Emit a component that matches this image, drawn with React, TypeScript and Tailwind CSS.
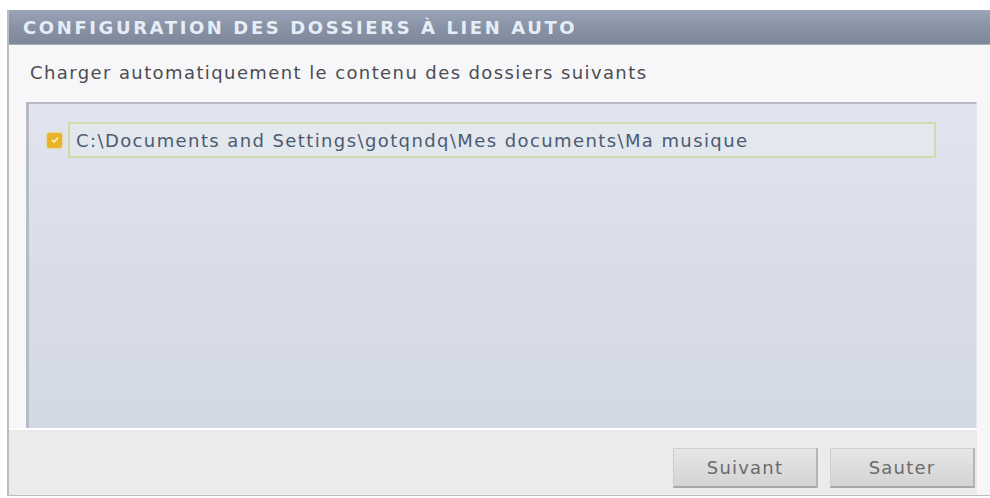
export default function App() {
  return (
    <div className="h-[498px] w-[990px] overflow-hidden bg-white pl-[7px] pt-[10px]">
      <div className="flex h-[486px] flex-col border-l-2 border-b border-[#b9bcc2] bg-[#f7f7f9]">
        {/* title bar */}
        <div className="flex h-[35px] items-center bg-gradient-to-b from-[#9aa5b6] via-[#8893a6] to-[#7d889b] pl-[14px] border-b border-[#a9b0bc]">
          <span className="font-['DejaVu_Sans',sans-serif] text-[18px] font-bold tracking-[2.6px] text-[#e6edf6]">
            CONFIGURATION DES DOSSIERS À LIEN AUTO
          </span>
        </div>

        <div className="flex flex-1 flex-col pr-[13px]">
          <div className="flex h-[57px] items-center pl-[21px] pb-[2px]">
            <span className="font-['DejaVu_Sans',sans-serif] text-[18px] tracking-[1.4px] text-[#4b4d52]">
              Charger automatiquement le contenu des dossiers suivants
            </span>
          </div>

          {/* folder list */}
          <div className="ml-[17px] h-[326px] border-l-[3px] border-t-2 border-r border-[#b7bbc6] border-r-[#e3e6ee] bg-gradient-to-b from-[#e2e5ef] via-[#d9dde9] to-[#d3d9e4] pl-[18px] pr-[40px] pt-[18px]">
            <div className="flex items-center gap-[6px]">
              <span className="flex h-[15px] w-[15px] shrink-0 items-center justify-center rounded-[2px] bg-[#eab32a] shadow-[0_0_3px_#f0c84a]">
                <svg width="10" height="10" viewBox="0 0 10 10" fill="none">
                  <path d="M2 5l2 2 4-4.5" stroke="#fff3c0" strokeWidth="1.6" />
                </svg>
              </span>
              <div className="flex h-[36px] flex-1 items-center border-2 border-[#cfdcaa] bg-[#e3e8ef] pl-[6px]">
                <span className="font-['DejaVu_Sans',sans-serif] text-[18px] tracking-[1.4px] text-[#4d5a72]">
                  C:\Documents and Settings\gotqndq\Mes documents\Ma musique
                </span>
              </div>
            </div>
          </div>

          {/* footer */}
          <div className="flex flex-1 items-start justify-end gap-[12px] border-t-2 border-white bg-[#ebebeb] pt-[18px] pr-[2px]">
            <button className="h-[40px] w-[145px] border border-[#cfcfcf] border-b-2 border-b-[#a9a9a9] border-r-2 border-r-[#b5b5b5] bg-gradient-to-b from-[#e6e6e6] to-[#d4d4d4] font-['DejaVu_Sans',sans-serif] text-[18px] tracking-[1.2px] text-[#6b6b6b]">
              Suivant
            </button>
            <button className="h-[40px] w-[145px] border border-[#cfcfcf] border-b-2 border-b-[#a9a9a9] border-r-2 border-r-[#b5b5b5] bg-gradient-to-b from-[#e6e6e6] to-[#d4d4d4] font-['DejaVu_Sans',sans-serif] text-[18px] tracking-[1.2px] text-[#6b6b6b]">
              Sauter
            </button>
          </div>
        </div>
      </div>
    </div>
  );
}
